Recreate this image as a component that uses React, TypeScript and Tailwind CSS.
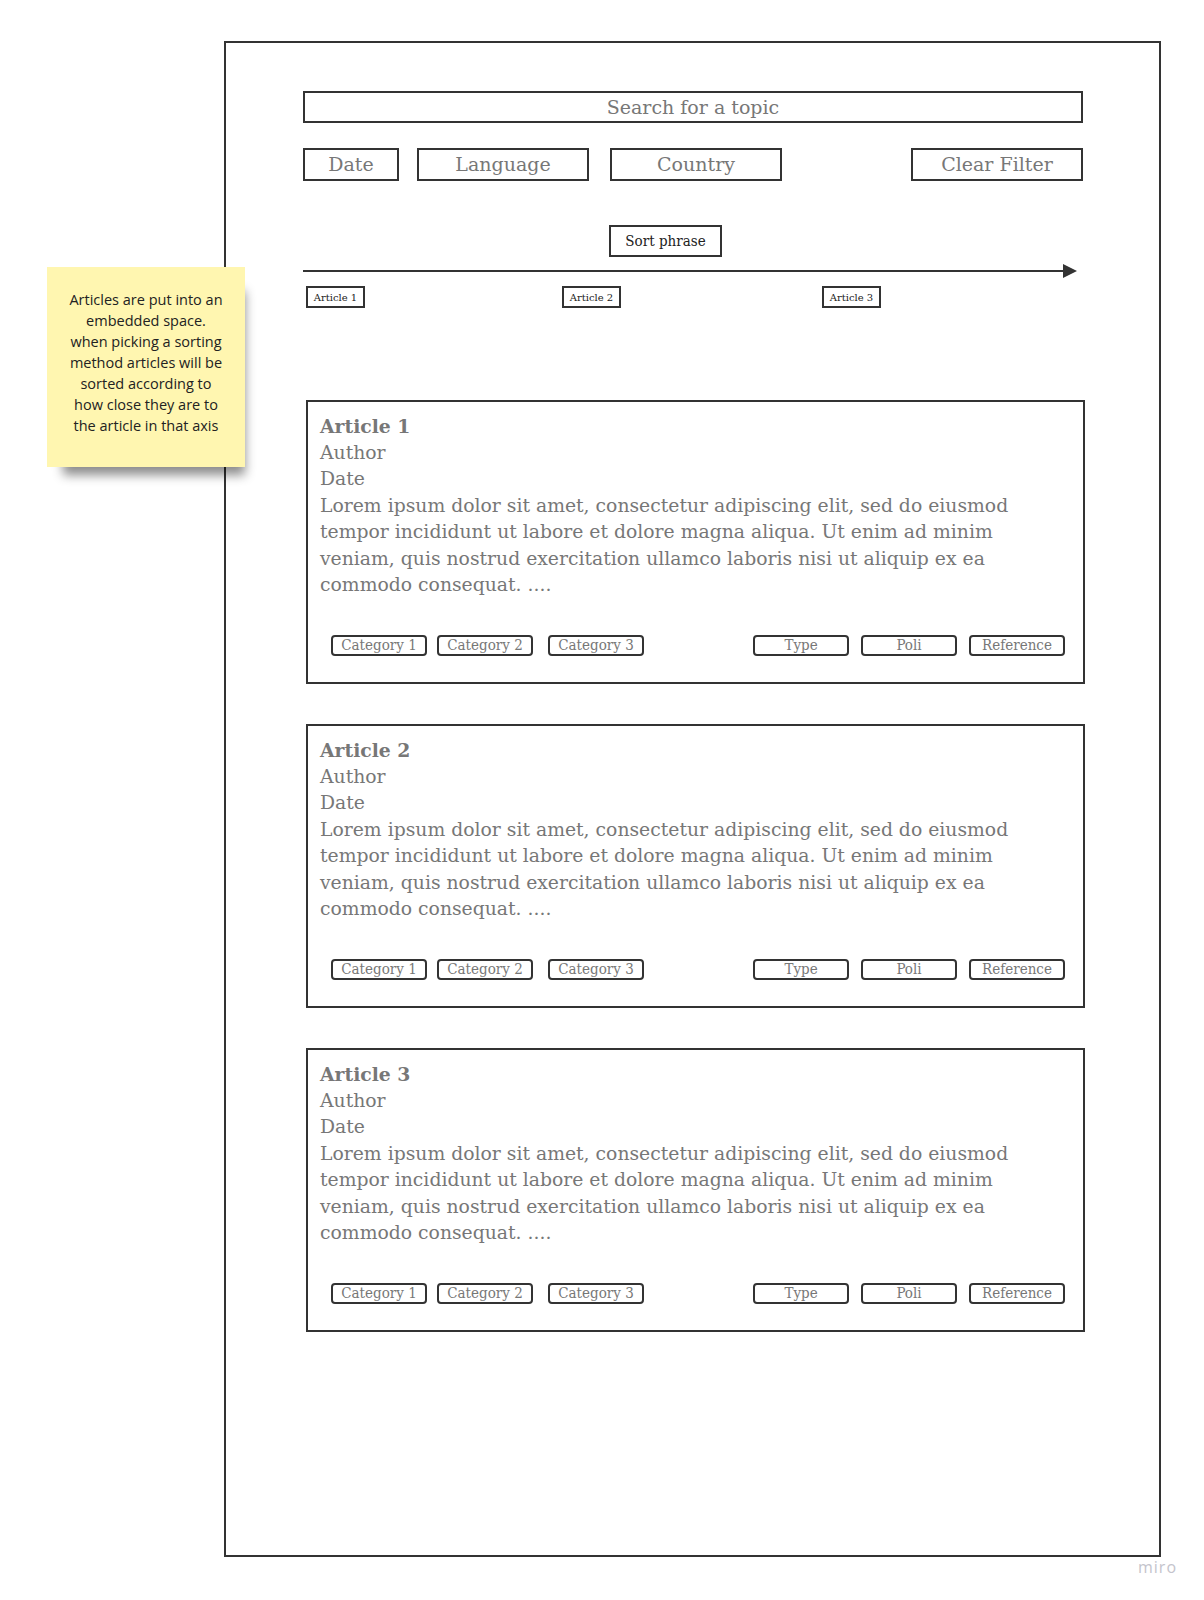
const serif = "font-['DejaVu_Serif',serif]";

const categories = ["Category 1", "Category 2", "Category 3"];
const meta = ["Type", "Poli", "Reference"];

function Tag({ label, className = "" }: { label: string; className?: string }) {
  return (
    <div
      className={`flex h-[21px] w-[96px] items-center justify-center rounded-[4px] border-2 border-[#333] text-[15px] leading-none text-[#777] [font-stretch:condensed] ${className}`}
    >
      {label}
    </div>
  );
}

function ArticleCard({ n }: { n: number }) {
  return (
    <div className="ml-[3px] h-[284px] w-[779px] border-2 border-[#333] pl-[12px] pt-[11px]">
      <div className="text-[18.8px] leading-[26.5px] text-[#777]">
        <div className="font-bold">Article {n}</div>
        <div>Author</div>
        <div>Date</div>
        <p className="whitespace-nowrap">
          Lorem ipsum dolor sit amet, consectetur adipiscing elit, sed do eiusmod
          <br />
          tempor incididunt ut labore et dolore magna aliqua. Ut enim ad minim
          <br />
          veniam, quis nostrud exercitation ullamco laboris nisi ut aliquip ex ea
          <br />
          commodo consequat. ....
        </p>
      </div>
      <div className="mt-[36px] flex pl-[11px] pr-[18px]">
        <Tag label={categories[0]} />
        <Tag label={categories[1]} className="ml-[10px]" />
        <Tag label={categories[2]} className="ml-[15px]" />
        <Tag label={meta[0]} className="ml-auto" />
        <Tag label={meta[1]} className="ml-[12px]" />
        <Tag label={meta[2]} className="ml-[12px]" />
      </div>
    </div>
  );
}

export default function App() {
  return (
    <div className={`relative h-[1600px] w-[1204px] bg-white ${serif}`}>
      <div className="pl-[224px] pt-[41px]">
        {/* Page frame */}
        <div className="h-[1516px] w-[937px] border-2 border-[#333] pl-[77px] pt-[48px]">
          <div className="w-[780px]">
            {/* Search */}
            <div className="flex h-[32px] items-center justify-center border-2 border-[#333] text-[19px] text-[#777]">
              Search for a topic
            </div>

            {/* Filters */}
            <div className="mt-[25px] flex text-[19px] text-[#777]">
              <div className="flex h-[33px] w-[96px] items-center justify-center border-2 border-[#333]">Date</div>
              <div className="ml-[18px] flex h-[33px] w-[172px] items-center justify-center border-2 border-[#333]">
                Language
              </div>
              <div className="ml-[21px] flex h-[33px] w-[172px] items-center justify-center border-2 border-[#333]">
                Country
              </div>
              <div className="ml-auto flex h-[33px] w-[172px] items-center justify-center border-2 border-[#333]">
                Clear Filter
              </div>
            </div>

            {/* Sort axis */}
            <div className="ml-[306px] mt-[44px] flex h-[32px] w-[113px] items-center justify-center border-2 border-[#333] text-[15px] text-[#222] [font-stretch:semi-condensed]">
              Sort phrase
            </div>
            <svg className="mt-[7px] block" width="780" height="14" viewBox="0 0 780 14">
              <line x1="0" y1="7" x2="762" y2="7" stroke="#333" strokeWidth="2" />
              <polygon points="760,0 774,7 760,14" fill="#333" />
            </svg>
            <div className="mt-[8px] flex text-[10px] text-[#222]">
              <div className="ml-[3px] flex h-[22px] w-[59px] items-center justify-center border-2 border-[#333]">Article 1</div>
              <div className="ml-[197px] flex h-[22px] w-[59px] items-center justify-center border-2 border-[#333]">Article 2</div>
              <div className="ml-[201px] flex h-[22px] w-[59px] items-center justify-center border-2 border-[#333]">Article 3</div>
            </div>

            {/* Articles */}
            <div className="mt-[92px] flex flex-col gap-[40px]">
              <ArticleCard n={1} />
              <ArticleCard n={2} />
              <ArticleCard n={3} />
            </div>
          </div>
        </div>
      </div>

      {/* Sticky note */}
      <div className="absolute left-[47px] top-[267px] flex h-[200px] w-[198px] items-center justify-center bg-[#fff6b0] pb-[10px] text-center font-['Open_Sans',sans-serif] text-[14.5px] leading-[21px] text-[#222] shadow-[8px_16px_10px_-8px_rgba(0,0,0,0.45)]">
        <p className="whitespace-nowrap">
          Articles are put into an
          <br />
          embedded space.
          <br />
          when picking a sorting
          <br />
          method articles will be
          <br />
          sorted according to
          <br />
          how close they are to
          <br />
          the article in that axis
        </p>
      </div>

      {/* Watermark */}
      <div className="absolute left-[1138px] top-[1555px] font-['Open_Sans',sans-serif] text-[16px] tracking-[1px] text-[#c4c4cc]">
        miro
      </div>
    </div>
  );
}
